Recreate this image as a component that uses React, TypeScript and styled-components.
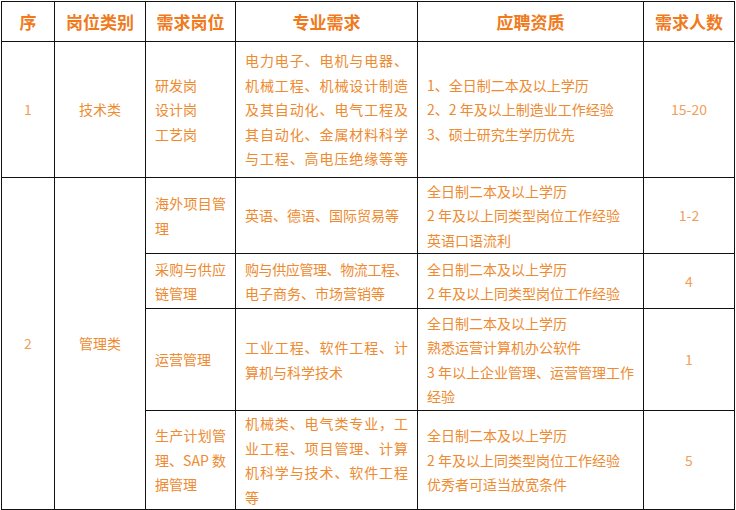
import React from "react";
import styled, { createGlobalStyle } from "styled-components";

const GlobalStyle = createGlobalStyle`
  html, body {
    margin: 0;
    padding: 0;
    background: #ffffff;
  }
  body {
    padding: 1px 0 0 1px;
    font-family: "Noto Sans CJK SC", "Noto Sans", sans-serif;
  }
`;

const Table = styled.table`
  border-collapse: collapse;
  table-layout: fixed;
  width: 734px;
`;

const Col = styled.col<{ $w: number }>`
  width: ${(p) => p.$w}px;
`;

const HeadCell = styled.th`
  height: 39px;
  padding: 0;
  border: 1px solid #111;
  color: #f07a1c;
  font-size: 17px;
  font-weight: 700;
  text-align: center;
  vertical-align: middle;
`;

const Row = styled.tr<{ $h: number }>`
  height: ${(p) => p.$h}px;
`;

const Cell = styled.td<{ $center?: boolean; $light?: boolean }>`
  padding: 0 9px;
  border: 1px solid #111;
  color: ${(p) => (p.$light ? "#f1a05a" : "#ee8a30")};
  font-size: 14px;
  line-height: 24.5px;
  text-align: ${(p) => (p.$center ? "center" : "left")};
  vertical-align: middle;
`;

const Line = styled.span<{ $full?: boolean }>`
  display: block;
  white-space: nowrap;
  text-align: ${(p) => (p.$full ? "justify" : "inherit")};
  text-align-last: ${(p) => (p.$full ? "justify" : "auto")};
`;

const Squeezed = styled(Line)`
  letter-spacing: -0.4px;
`;

function Lines({ items, full = [] }: { items: string[]; full?: number[] }) {
  return (
    <>
      {items.map((t, i) => (
        <Line key={i} $full={full.includes(i)}>
          {t}
        </Line>
      ))}
    </>
  );
}

const headers = ["序", "岗位类别", "需求岗位", "专业需求", "应聘资质", "需求人数"];
const widths = [53, 91, 90, 182, 226, 91];

export default function App() {
  return (
    <>
      <GlobalStyle />
      <Table>
        <colgroup>
          {widths.map((w, i) => (
            <Col key={i} $w={w} />
          ))}
        </colgroup>
        <thead>
          <tr>
            {headers.map((h) => (
              <HeadCell key={h}>{h}</HeadCell>
            ))}
          </tr>
        </thead>
        <tbody>
          <Row $h={136}>
            <Cell $center $light>1</Cell>
            <Cell $center>技术类</Cell>
            <Cell>
              <Lines items={["研发岗", "设计岗", "工艺岗"]} />
            </Cell>
            <Cell>
              <Lines
                items={[
                  "电力电子、电机与电器、",
                  "机械工程、机械设计制造",
                  "及其自动化、电气工程及",
                  "其自动化、金属材料科学",
                  "与工程、高电压绝缘等等",
                ]}
                full={[0, 1, 2, 3, 4]}
              />
            </Cell>
            <Cell>
              <Lines
                items={[
                  "1、全日制二本及以上学历",
                  "2、2 年及以上制造业工作经验",
                  "3、硕士研究生学历优先",
                ]}
              />
            </Cell>
            <Cell $center $light>15-20</Cell>
          </Row>
          <Row $h={76}>
            <Cell $center $light rowSpan={4}>2</Cell>
            <Cell $center rowSpan={4}>管理类</Cell>
            <Cell>
              <Lines items={["海外项目管", "理"]} full={[0]} />
            </Cell>
            <Cell>
              <Lines items={["英语、德语、国际贸易等"]} />
            </Cell>
            <Cell>
              <Lines
                items={[
                  "全日制二本及以上学历",
                  "2 年及以上同类型岗位工作经验",
                  "英语口语流利",
                ]}
              />
            </Cell>
            <Cell $center $light>1-2</Cell>
          </Row>
          <Row $h={55}>
            <Cell>
              <Lines items={["采购与供应", "链管理"]} full={[0]} />
            </Cell>
            <Cell>
              <Squeezed $full>购与供应管理、物流工程、</Squeezed>
              <Line>电子商务、市场营销等</Line>
            </Cell>
            <Cell>
              <Lines
                items={["全日制二本及以上学历", "2 年及以上同类型岗位工作经验"]}
              />
            </Cell>
            <Cell $center $light>4</Cell>
          </Row>
          <Row $h={102}>
            <Cell>
              <Lines items={["运营管理"]} />
            </Cell>
            <Cell>
              <Lines
                items={["工业工程、软件工程、计", "算机与科学技术"]}
                full={[0]}
              />
            </Cell>
            <Cell>
              <Lines
                items={[
                  "全日制二本及以上学历",
                  "熟悉运营计算机办公软件",
                  "3 年以上企业管理、运营管理工作",
                  "经验",
                ]}
              />
            </Cell>
            <Cell $center $light>1</Cell>
          </Row>
          <Row $h={99}>
            <Cell>
              <Lines
                items={["生产计划管", "理、SAP 数", "据管理"]}
                full={[0, 1]}
              />
            </Cell>
            <Cell>
              <Lines
                items={[
                  "机械类、电气类专业，工",
                  "业工程、项目管理、计算",
                  "机科学与技术、软件工程",
                  "等",
                ]}
                full={[0, 1, 2]}
              />
            </Cell>
            <Cell>
              <Lines
                items={[
                  "全日制二本及以上学历",
                  "2 年及以上同类型岗位工作经验",
                  "优秀者可适当放宽条件",
                ]}
              />
            </Cell>
            <Cell $center $light>5</Cell>
          </Row>
        </tbody>
      </Table>
    </>
  );
}
